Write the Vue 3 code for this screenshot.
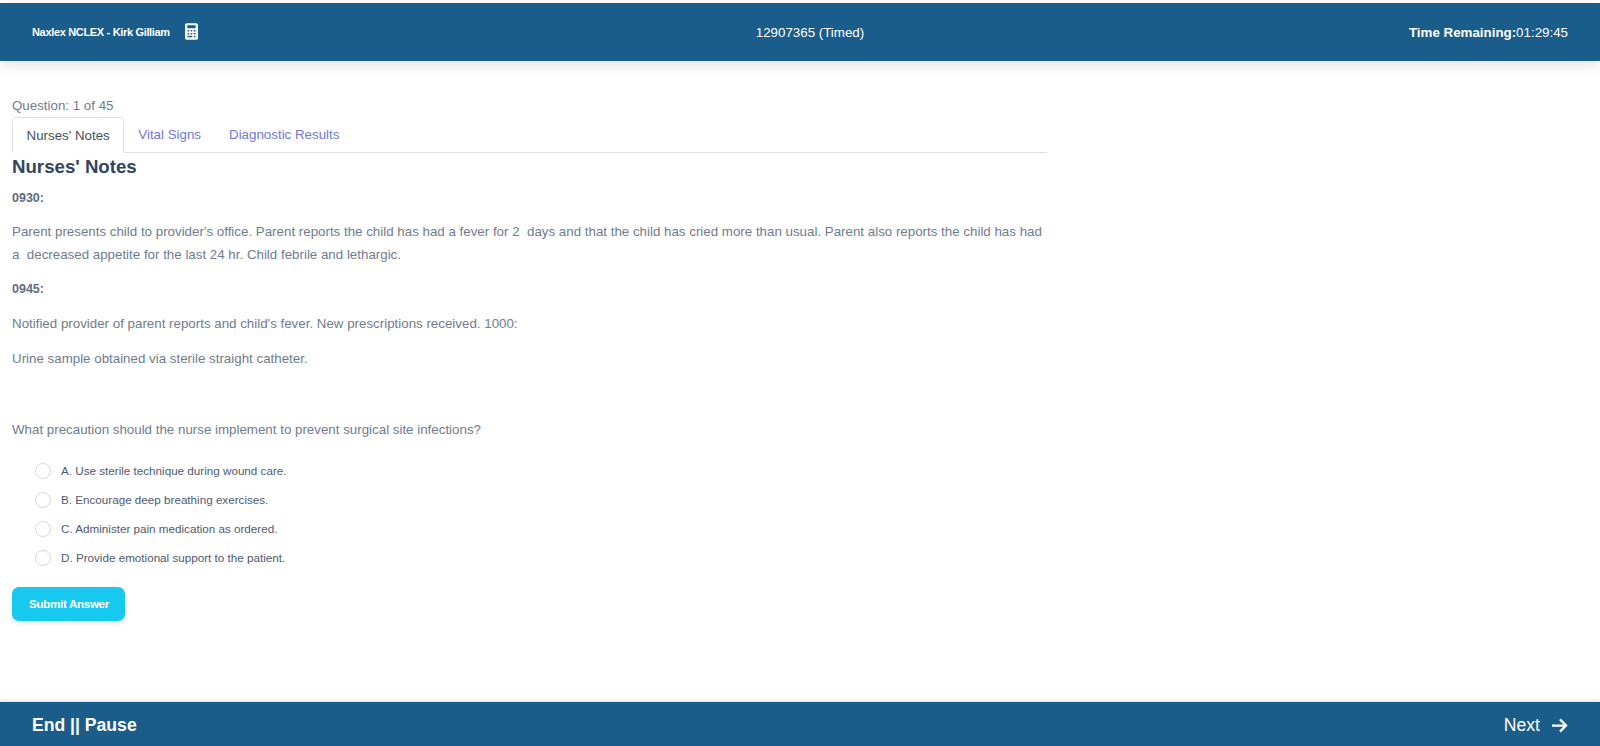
<script setup>
const options = [
  'A. Use sterile technique during wound care.',
  'B. Encourage deep breathing exercises.',
  'C. Administer pain medication as ordered.',
  'D. Provide emotional support to the patient.'
]
</script>

<template>
  <div class="page">
    <header class="top">
      <div class="brand">
        <span class="name">Naxlex NCLEX - Kirk Gilliam</span>
        <svg class="calc" viewBox="0 0 14 18" width="13" height="17">
          <path fill="#fff" fill-rule="evenodd" d="M2 0h10a2 2 0 0 1 2 2v14a2 2 0 0 1-2 2H2a2 2 0 0 1-2-2V2a2 2 0 0 1 2-2zM2.5 2.2v3.2h9V2.2zM2.7 7.4v1.7h1.8V7.4zM6.1 7.4v1.7h1.8V7.4zM9.5 7.4v1.7h1.8V7.4zM2.7 10.5v1.7h1.8v-1.7zM6.1 10.5v1.7h1.8v-1.7zM9.5 10.5v1.7h1.8v-1.7zM2.7 13.6v1.7h5.2v-1.7zM9.5 13.6v1.7h1.8v-1.7z"/>
        </svg>
      </div>
      <div class="center">12907365 (Timed)</div>
      <div class="time"><b>Time Remaining:</b>01:29:45</div>
    </header>

    <main class="content">
      <div class="counter">Question: 1 of 45</div>
      <nav class="tabs">
        <span class="tab active">Nurses' Notes</span>
        <span class="tab">Vital Signs</span>
        <span class="tab">Diagnostic Results</span>
      </nav>
      <h2>Nurses' Notes</h2>
      <p class="stamp">0930:</p>
      <p>Parent presents child to provider's office. Parent reports the child has had a fever for 2&nbsp; days and that the child has cried more than usual. Parent also reports the child has had a&nbsp; decreased appetite for the last 24 hr. Child febrile and lethargic.</p>
      <p class="stamp">0945:</p>
      <p>Notified provider of parent reports and child's fever. New prescriptions received. 1000:</p>
      <p>Urine sample obtained via sterile straight catheter.</p>
      <p class="question">What precaution should the nurse implement to prevent surgical site infections?</p>
      <ul class="options">
        <li v-for="o in options" :key="o"><span class="radio"></span>{{ o }}</li>
      </ul>
      <button class="submit">Submit Answer</button>
    </main>

    <footer class="bottom">
      <span class="end">End || Pause</span>
      <span class="next">Next
        <svg viewBox="0 0 18 16" width="17" height="15"><path d="M1 8h15M9.5 1.5 16 8l-6.5 6.5" fill="none" stroke="#fff" stroke-width="2.4"/></svg>
      </span>
    </footer>
  </div>
</template>

<style scoped>
.page {
  height: 746px;
  display: flex;
  flex-direction: column;
  font-family: "Liberation Sans", Arial, sans-serif;
  background: #fff;
  overflow: hidden;
  padding-top: 3px;
  box-sizing: border-box;
}
.top {
  height: 58px;
  flex: none;
  background: #1a5c8a;
  color: #fff;
  display: grid;
  grid-template-columns: 1fr auto 1fr;
  align-items: center;
  padding: 0 32px;
  box-shadow: 0 4px 12px rgba(0, 0, 0, .12);
  font-size: 13.33px;
}
.brand { display: flex; align-items: center; gap: 15px; }
.name { font-size: 11px; font-weight: 700; letter-spacing: -.33px; }
.calc { margin-top: -2px; }
.center { margin-left: 20px; }
.time { justify-self: end; }
.content { flex: 1; padding: 36px 12px 0; color: #707c8e; font-size: 13.33px; width: 1035px; box-sizing: content-box; }
.counter { line-height: 17px; }
.tabs { display: flex; border-bottom: 1px solid #dee2e6; margin-top: 3px; height: 36px; box-sizing: border-box; }
.tab { padding: 0 14px; line-height: 36px; color: #7378d8; }
.tab.active {
  color: #495057;
  border: 1px solid #dee2e6;
  border-bottom: 1px solid #fff;
  border-radius: 5px 5px 0 0;
  height: 36px;
  box-sizing: border-box;
  padding: 0 13.5px;
}
h2 { margin: 2px 0 8px; font-size: 18.67px; line-height: 24px; color: #34455f; }
p { margin: 0 0 12.5px; line-height: 22.4px; }
.stamp { font-weight: 700; font-size: 12.5px; color: #5f6c80; }
h2 + .stamp { margin-bottom: 11.7px; }
.question { margin-top: 48px; margin-bottom: 15px; }
.options { list-style: none; margin: 0; padding: 0 0 0 23px; }
.options li { display: flex; align-items: center; height: 29px; font-size: 11.67px; color: #4f5a70; }
.radio { width: 16px; height: 16px; border-radius: 50%; border: 1px solid #d5d8dd; margin-right: 10px; flex: none; box-sizing: border-box; }
.submit {
  display: block;
  margin-top: 15px;
  width: 113px;
  height: 34px;
  border: 0;
  border-radius: 7px;
  background: #17c9ee;
  color: #fff;
  padding: 0 0 2px 1px;
  font: 700 11.67px "Liberation Sans", Arial, sans-serif;
  letter-spacing: -.35px;
  box-shadow: 0 2px 5px rgba(0, 0, 0, .12);
}
.bottom {
  height: 44px;
  flex: none;
  background: #1a5c8a;
  color: #fff;
  display: flex;
  justify-content: space-between;
  align-items: center;
  padding: 3px 32px 0;
  box-sizing: border-box;
  font-size: 17.6px;
  box-shadow: 0 -1px 3px rgba(0, 0, 0, .15);
}
.end { font-weight: 700; }
.next { display: flex; align-items: center; gap: 11px; }
</style>
